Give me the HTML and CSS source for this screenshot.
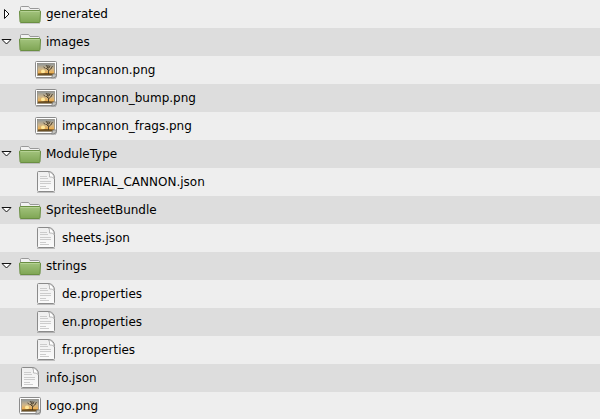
FILE: index.html
```html
<!DOCTYPE html>
<html lang="en">
<head>
    <meta charset="UTF-8">
    <meta name="viewport" content="width=device-width, initial-scale=1.0">
    <title>Files</title>
    <link rel="stylesheet" href="styles.css">
</head>
<body>
    <!-- icons shared by the rows -->
    <svg class="defs" width="0" height="0" aria-hidden="true">
        <defs>
            <linearGradient id="green" x1="0" y1="0" x2="0" y2="1">
                <stop offset="0" stop-color="#a3c47e"/>
                <stop offset="1" stop-color="#7fa554"/>
            </linearGradient>
            <linearGradient id="paper" x1="0" y1="0" x2="0" y2="1">
                <stop offset="0" stop-color="#eeeeee"/>
                <stop offset="1" stop-color="#fbfbfb"/>
            </linearGradient>
            <linearGradient id="sunset" x1="0" y1="0" x2="0" y2="1">
                <stop offset="0" stop-color="#8f979a"/>
                <stop offset="0.45" stop-color="#cdb58a"/>
                <stop offset="0.8" stop-color="#efae4c"/>
                <stop offset="1" stop-color="#b08038"/>
            </linearGradient>
        </defs>
        <symbol id="folder" viewBox="0 0 24 24">
            <path d="M2.500 12V5.500q0-1 1-1H10q1 0 1.500 1l.5 1h8.500q1 0 1 1V12z" fill="#f2f2f2" stroke="#999"/>
            <path d="M1.500 10q0-1.500 1-1.500h19q1 0 1 1.500l-.5 9.500q0 1-1 1H3q-1 0-1-1z" fill="url(#green)" stroke="#6a8f42"/>
            <path d="M2.500 9.500h19" stroke="#b5d194" fill="none"/>
            <path d="M2 21.500h20" stroke="#000" stroke-opacity=".15" fill="none"/>
        </symbol>
        <symbol id="file" viewBox="0 0 24 24">
            <path d="M3 22.500h18" stroke="#000" stroke-opacity=".2"/>
            <path d="M3.500 2.500q0-1 1-1H15q5.500 1 5.500 7v12q0 1-1 1h-15q-1 0-1-1z" fill="url(#paper)" stroke="#8a8a8a"/>
            <path d="M14.500 2q1.500 1.500 1 5 3-.5 4.500 1.500Q20 3 14.500 2z" fill="#fff" stroke="#aaa" stroke-width=".8"/>
            <path d="M6 6.500h7M6 8.500h8M6 11.500h11M6 13.500h11M6 16.500h6M6 18.500h9" stroke="#ccc"/>
        </symbol>
        <symbol id="picture" viewBox="0 0 24 24">
            <path d="M2 20.500h20" stroke="#000" stroke-opacity=".2"/>
            <rect x="1.500" y="3.500" width="21" height="16" rx="1" fill="#fff" stroke="#8c8c8c"/>
            <rect x="3.500" y="5.500" width="17" height="12" fill="url(#sunset)" stroke="#77736a" stroke-width=".6"/>
            <circle cx="9" cy="13.500" r="2" fill="#ffe79a"/>
            <path d="M4 17v-1.500q8-1 16 0V17z" fill="#6b5024"/>
            <path d="M14.500 16v-3.500l-2.500-2.500m2.500 3l3-3M14 12V7m-2.500 3.500L9.500 9m7.500 1.500l1.500-2.500m-4.500 2l-2-3m3 3l1-2.500" stroke="#3b3020" stroke-width=".8" fill="none"/>
            <path d="M17.500 20l1.500-4 3.500 0q0 4-5 4z" fill="#c4c4be" stroke="#808080" stroke-width=".8"/>
        </symbol>
        <symbol id="open" viewBox="0 0 12 12">
            <path d="M2 3.500h9L6.500 8z" fill="#fff" stroke="#111"/>
        </symbol>
        <symbol id="closed" viewBox="0 0 12 12">
            <path d="M4.500 1.500v9L9 6z" fill="#fff" stroke="#111"/>
        </symbol>
    </svg>

    <ul class="tree">
        <li class="row">
            <button class="toggle" aria-label="Expand generated"><svg><use href="#closed"/></svg></button>
            <svg class="icon"><use href="#folder"/></svg>
            <span>generated</span>
        </li>
        <li class="row">
            <button class="toggle" aria-label="Collapse images"><svg><use href="#open"/></svg></button>
            <svg class="icon"><use href="#folder"/></svg>
            <span>images</span>
        </li>
        <li class="row child">
            <svg class="icon"><use href="#picture"/></svg>
            <span>impcannon.png</span>
        </li>
        <li class="row child">
            <svg class="icon"><use href="#picture"/></svg>
            <span>impcannon_bump.png</span>
        </li>
        <li class="row child">
            <svg class="icon"><use href="#picture"/></svg>
            <span>impcannon_frags.png</span>
        </li>
        <li class="row">
            <button class="toggle" aria-label="Collapse ModuleType"><svg><use href="#open"/></svg></button>
            <svg class="icon"><use href="#folder"/></svg>
            <span>ModuleType</span>
        </li>
        <li class="row child">
            <svg class="icon"><use href="#file"/></svg>
            <span>IMPERIAL_CANNON.json</span>
        </li>
        <li class="row">
            <button class="toggle" aria-label="Collapse SpritesheetBundle"><svg><use href="#open"/></svg></button>
            <svg class="icon"><use href="#folder"/></svg>
            <span>SpritesheetBundle</span>
        </li>
        <li class="row child">
            <svg class="icon"><use href="#file"/></svg>
            <span>sheets.json</span>
        </li>
        <li class="row">
            <button class="toggle" aria-label="Collapse strings"><svg><use href="#open"/></svg></button>
            <svg class="icon"><use href="#folder"/></svg>
            <span>strings</span>
        </li>
        <li class="row child">
            <svg class="icon"><use href="#file"/></svg>
            <span>de.properties</span>
        </li>
        <li class="row child">
            <svg class="icon"><use href="#file"/></svg>
            <span>en.properties</span>
        </li>
        <li class="row child">
            <svg class="icon"><use href="#file"/></svg>
            <span>fr.properties</span>
        </li>
        <li class="row leaf">
            <svg class="icon"><use href="#file"/></svg>
            <span>info.json</span>
        </li>
        <li class="row leaf">
            <svg class="icon"><use href="#picture"/></svg>
            <span>logo.png</span>
        </li>
    </ul>
</body>
</html>
```
FILE: styles.css
```css
body {
    margin: 0;
    overflow: hidden;
    background-color: #eeeeee;
    color: #000;
    font-family: "DejaVu Sans", sans-serif;
    font-size: 12px;
}
.defs {
    position: absolute;
}
.tree {
    list-style: none;
    margin: 0;
    padding: 0;
}
.row {
    display: flex;
    align-items: center;
    height: 28px;
    background-color: #eeeeee;
}
.row:nth-child(even) {
    background-color: #dddddd;
}
.child {
    padding-left: 34px;
}
.leaf {
    padding-left: 18px;
}
.toggle {
    width: 18px;
    height: 28px;
    padding: 0;
    border: none;
    background: none;
    display: flex;
    align-items: center;
    cursor: pointer;
}
.toggle svg {
    width: 12px;
    height: 12px;
}
.icon {
    width: 24px;
    height: 24px;
    margin-right: 4px;
}
```
